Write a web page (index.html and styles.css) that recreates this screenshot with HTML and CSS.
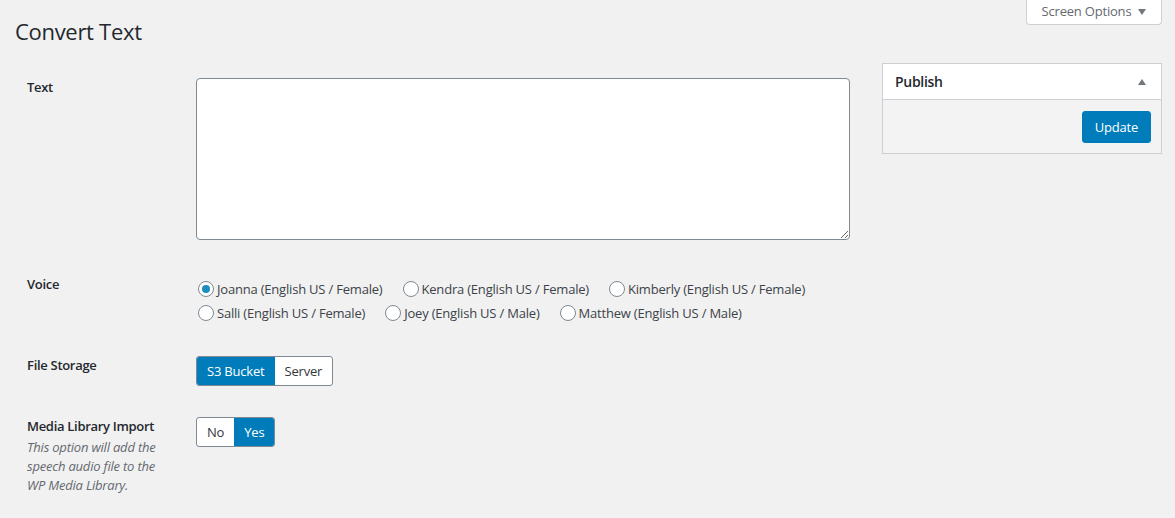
FILE: index.html
```html
<!DOCTYPE html>
<html lang="en">
<head>
<meta charset="utf-8">
<title>Convert Text</title>
<link rel="stylesheet" href="styles.css">
</head>
<body>
<div class="wrap">
  <div class="screen-meta">
    <button class="screen-options" type="button">Screen Options <span class="caret-down"></span></button>
  </div>
  <h1 class="page-title">Convert Text</h1>
  <div class="columns">
    <div class="main">
      <div class="form-row row-text">
        <div class="label">Text</div>
        <div class="field"><textarea class="textarea"></textarea></div>
      </div>
      <div class="form-row row-voice">
        <div class="label">Voice</div>
        <div class="field voices">
          <label class="radio"><span class="dot checked"></span>Joanna (English US / Female)</label>
          <label class="radio"><span class="dot"></span>Kendra (English US / Female)</label>
          <label class="radio"><span class="dot"></span>Kimberly (English US / Female)</label>
          <label class="radio"><span class="dot"></span>Salli (English US / Female)</label>
          <label class="radio"><span class="dot"></span>Joey (English US / Male)</label>
          <label class="radio"><span class="dot"></span>Matthew (English US / Male)</label>
        </div>
      </div>
      <div class="form-row">
        <div class="label">File Storage</div>
        <div class="field">
          <div class="seg">
            <span class="seg-btn active">S3 Bucket</span><span class="seg-btn">Server</span>
          </div>
        </div>
      </div>
      <div class="form-row">
        <div class="label">Media Library Import
          <p class="desc">This option will add the<br>speech audio file to the<br>WP Media Library.</p>
        </div>
        <div class="field">
          <div class="seg">
            <span class="seg-btn">No</span><span class="seg-btn active">Yes</span>
          </div>
        </div>
      </div>
    </div>
    <aside class="side">
      <div class="postbox">
        <div class="postbox-head">
          <span class="postbox-title">Publish</span>
          <span class="caret-up"></span>
        </div>
        <div class="postbox-body">
          <button class="btn-primary" type="button">Update</button>
        </div>
      </div>
    </aside>
  </div>
</div>
</body>
</html>
```
FILE: styles.css
```css
html, body {
  margin: 0;
  padding: 0;
  background: #f1f1f1;
}
body {
  font-family: "Open Sans", "Noto Sans", "Liberation Sans", sans-serif;
  font-size: 13px;
  letter-spacing: -0.2px;
  color: #444;
}
.wrap {
  padding: 0 13px 0 15px;
}
.screen-meta {
  float: right;
}
.screen-options {
  display: flex;
  align-items: center;
  justify-content: center;
  gap: 7px;
  width: 136px;
  height: 25px;
  background: #fff;
  border: 1px solid #ccd0d4;
  border-top: none;
  border-radius: 0 0 4px 4px;
  font-family: inherit;
  font-size: 13px;
  letter-spacing: -0.2px;
  color: #646970;
  padding: 0 0 2px;
}
.caret-down {
  width: 0;
  height: 0;
  border-left: 4px solid transparent;
  border-right: 4px solid transparent;
  border-top: 6px solid #72777c;
  margin-top: 2px;
}
.caret-up {
  width: 0;
  height: 0;
  border-left: 4px solid transparent;
  border-right: 4px solid transparent;
  border-bottom: 6px solid #72777c;
  margin-right: 3px;
}
.page-title {
  margin: 0;
  padding-top: 16px;
  font-size: 22px;
  font-weight: 400;
  letter-spacing: -0.3px;
  line-height: 30px;
  color: #23282d;
}
.columns {
  display: grid;
  grid-template-columns: 1fr 280px;
  column-gap: 20px;
  margin-top: 17px;
  clear: both;
}
.main {
  padding-top: 15px;
  display: flex;
  flex-direction: column;
  gap: 31px;
}
.form-row {
  display: flex;
  align-items: flex-start;
}
.label {
  width: 169px;
  padding-left: 12px;
  font-size: 13px;
  font-weight: 600;
  letter-spacing: -0.3px;
  line-height: 19px;
  color: #23282d;
  flex: none;
}
.desc {
  margin: 2px 0 0;
  font-size: 13px;
  font-weight: 400;
  font-style: italic;
  letter-spacing: -0.2px;
  line-height: 19px;
  color: #646970;
}
.field {
  flex: 1;
}
.textarea {
  display: block;
  box-sizing: border-box;
  width: 654px;
  height: 162px;
  margin: 0 0 4px;
  border: 1px solid #7e8993;
  border-radius: 4px;
  background: #fff;
}
.voices {
  display: flex;
  flex-wrap: wrap;
  width: 654px;
  flex: none;
  margin-top: 2px;
}
.radio {
  display: flex;
  align-items: center;
  height: 24px;
  margin-right: 18px;
  padding-left: 2px;
  color: #3c434a;
}
.dot {
  box-sizing: border-box;
  width: 16px;
  height: 16px;
  border: 1px solid #7e8993;
  border-radius: 50%;
  background: #fff;
  margin-right: 3px;
  display: flex;
  align-items: center;
  justify-content: center;
}
.dot.checked::after {
  content: "";
  width: 8px;
  height: 8px;
  border-radius: 50%;
  background: #1e8cbe;
}
.seg {
  display: inline-flex;
  border: 1px solid #7e8993;
  border-radius: 3px;
  overflow: hidden;
  background: #fff;
}
.seg-btn {
  height: 28px;
  line-height: 28px;
  padding: 0 10px;
  color: #32373c;
}
.seg-btn.active {
  background: #007cba;
  color: #fff;
}
.postbox {
  border: 1px solid #ccd0d4;
  background: #f3f3f3;
}
.postbox-head {
  display: flex;
  align-items: center;
  justify-content: space-between;
  height: 35px;
  padding: 0 12px;
  background: #fff;
  border-bottom: 1px solid #ccd0d4;
}
.postbox-title {
  font-size: 14px;
  font-weight: 600;
  letter-spacing: -0.3px;
  color: #23282d;
}
.postbox-body {
  display: flex;
  justify-content: flex-end;
  padding: 11px 10px 10px;
}
.btn-primary {
  height: 32px;
  padding: 0 12px;
  background: #007cba;
  border: 1px solid #007cba;
  border-radius: 3px;
  color: #fff;
  font-family: inherit;
  font-size: 13px;
  letter-spacing: -0.2px;
}
```
